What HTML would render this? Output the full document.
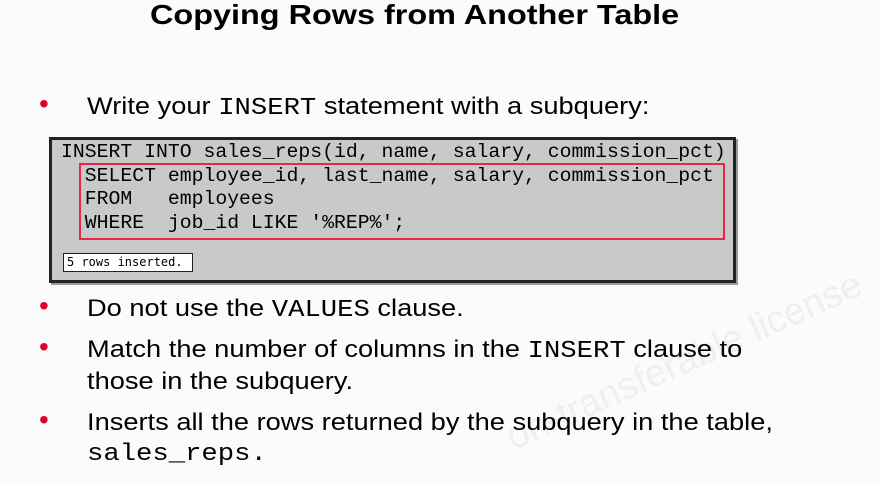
<html><head><style>
body{margin:0;width:879px;height:486px;background:#fbfbfb;font-family:"Liberation Sans",sans-serif;position:relative;overflow:hidden;color:#000}
.a{position:absolute;white-space:pre}
.t{font-weight:bold;font-size:28px;left:0;width:829px;text-align:center;top:-1px;transform:scaleX(1.157);transform-origin:414px 0}
.b{font-size:24px;left:87px;transform:scaleX(1.135);transform-origin:0 0}
.d{color:#e0002a;font-size:28px;left:39px}
.m{font-family:"Liberation Mono",monospace}
.c{font-family:"Liberation Mono",monospace;font-size:19.8px;left:61px}
</style></head><body>
<div class="a" style="left:500px;top:420px;font-size:38px;color:#efefef;transform:rotate(-24deg);transform-origin:left top">on-transferable license</div>
<div class="a t">Copying Rows from Another Table</div>
<div class="a d" style="top:88px">•</div>
<div class="a b" style="top:93px">Write your <span class="m">INSERT</span> statement with a subquery:</div>
<div class="a" style="left:49px;top:137px;width:681px;height:140px;background:#c9c9c9;border:3px solid #222;box-shadow:2px 2px 0 #999"></div>
<div class="a" style="left:79px;top:163px;width:642px;height:73px;border:2px solid #e8274b"></div>
<div class="a c" style="top:141px">INSERT INTO sales_reps(id, name, salary, commission_pct)</div>
<div class="a c" style="top:165px">  SELECT employee_id, last_name, salary, commission_pct</div>
<div class="a c" style="top:188px">  FROM   employees</div>
<div class="a c" style="top:212px">  WHERE  job_id LIKE '%REP%';</div>
<div class="a" style="left:63px;top:253px;width:125px;height:17px;background:#fff;border:1px solid #222;font-family:'DejaVu Sans Mono',monospace;font-size:12px;line-height:17px;padding-left:3px;box-sizing:content-box">5 rows inserted.</div>
<div class="a d" style="top:290px">•</div>
<div class="a b" style="top:295px">Do not use the <span class="m">VALUES</span> clause.</div>
<div class="a d" style="top:331px">•</div>
<div class="a b" style="top:336px">Match the number of columns in the <span class="m">INSERT</span> clause to</div>
<div class="a b" style="top:368px">those in the subquery.</div>
<div class="a d" style="top:404px">•</div>
<div class="a b" style="top:409px">Inserts all the rows returned by the subquery in the table,</div>
<div class="a b m" style="top:441px">sales_reps.</div>
</body></html>
